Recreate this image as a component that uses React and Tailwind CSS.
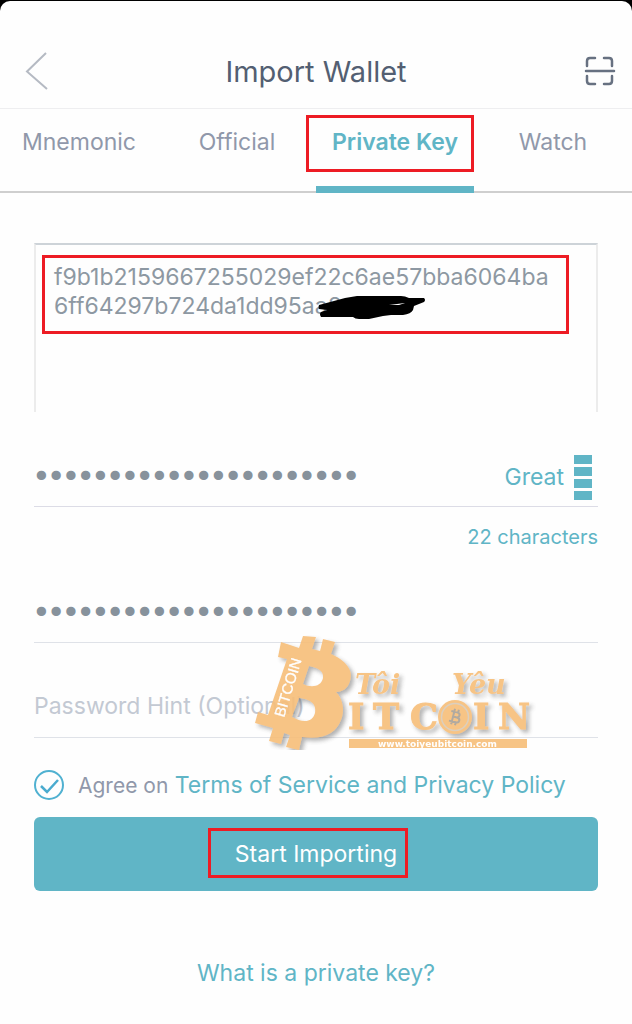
import React, { useState } from "react";

const TABS = ["Mnemonic", "Official", "Private Key", "Watch"];

function Watermark() {
  return (
    <svg
      viewBox="254 635 284 115"
      className="pointer-events-none absolute top-[-8px] left-[220px] h-[115px] w-[284px] overflow-hidden opacity-90"
      aria-hidden="true"
    >
      <defs>
        <filter id="shade" x="-10%" y="-10%" width="125%" height="125%">
          <feDropShadow dx="3" dy="3" stdDeviation="2" floodColor="#555" floodOpacity="0.5" />
        </filter>
      </defs>
      <g fill="#f7be79" filter="url(#shade)">
        <path
          fillRule="evenodd"
          d="M303 636 L316 637 L312 649 L320 651 L323 639 L335 642 L331 654 C345 660 354 670 350 681 C348 688 343 692 336 692 C343 699 345 711 341 720 C336 733 324 740 302 737 L299 750 L286 747 L290 735 L284 733 L281 744 L269 741 L273 728 L255 723 L258 712 L268 715 L287 659 L278 657 L281 642 L299 648 Z
          M309 666 L303 684 C311 688 321 687 323 678 C324 670 317 668 309 666 Z
          M299 698 L292 717 C301 722 312 724 315 713 C317 703 309 699 299 698 Z"
        />
        <g fontFamily="DejaVu Serif, serif" fontWeight="700">
          <text x="355" y="694" fontSize="27" fontStyle="italic">Tôi</text>
          <text x="452" y="694" fontSize="27" fontStyle="italic">Yêu</text>
          <g stroke="#f7be79" strokeWidth="1">
            <text x="348" y="729" fontSize="35">I</text>
            <text x="373" y="729" fontSize="35">T</text>
            <text x="410" y="729" fontSize="35">C</text>
            <text x="473" y="729" fontSize="35">I</text>
            <text x="498" y="729" fontSize="35">N</text>
          </g>
        </g>
        <circle cx="455" cy="717" r="17" />
      </g>
      <circle cx="455" cy="717" r="13.500" fill="none" stroke="#d8cbb9" strokeWidth="1.500" />
      {/* small coin mark */}
      <g transform="rotate(14 455 717)" fill="none" stroke="#a9a196" strokeWidth="2">
        <path d="M450 712h6q3 0 3 2.500t-3 2.500h-3M453 717h4q3 0 3 2.500t-3 2.500h-7M453 712v10M453 709v3M457 709v3M453 722v3M457 722v3" />
      </g>
      <rect x="349" y="739" width="178" height="9" fill="#f7be79" />
      <text x="378" y="747" fontSize="9" fontWeight="700" fontFamily="DejaVu Sans, sans-serif" fill="#fff">www.toiyeubitcoin.com</text>
      <text transform="translate(284 718) rotate(-73)" fontSize="15" fontFamily="Liberation Sans, sans-serif" fill="#fff" stroke="#fff" strokeWidth="0.300">BITCOIN</text>
    </svg>
  );
}

export default function App() {
  const [tab, setTab] = useState("Private Key");
  const [key, setKey] = useState("f9b1b2159667255029ef22c6ae57bba6064ba6ff64297b724da1dd95aa8");
  const [password, setPassword] = useState("abcdefghijklmnopqrstuv");
  const [repeat, setRepeat] = useState("abcdefghijklmnopqrstuv");
  const [agreed, setAgreed] = useState(true);

  return (
    <div className="min-h-screen bg-black pt-px font-['Inter',sans-serif] text-[23px] leading-7">
      <div className="min-h-[1023px] rounded-t-[10px] bg-[#fefefe]">
        <header className="grid h-[108px] grid-cols-[1fr_auto_1fr] items-end border-b border-[#eeeef0] px-4 pb-4">
          <button aria-label="Back" className="flex h-10 w-10 items-center justify-center">
            <svg viewBox="0 0 40 40" className="h-10 w-10" fill="none" stroke="#b5bac3" strokeWidth="2">
              <path d="M30 1 11 19.500 31 37" />
            </svg>
          </button>
          <h1 className="text-[29px] leading-10 text-[#535f72]">Import Wallet</h1>
          <button aria-label="Scan" className="flex h-10 w-8 items-center justify-center justify-self-end">
            <svg viewBox="0 0 32 32" className="h-8 w-8" fill="none" stroke="#677181" strokeWidth="2.500" strokeLinecap="round">
              <path d="M3 10V5q0-3 3-3h5M20 2h5q3 0 3 3v5M28 20v5q0 3-3 3h-5M11 28H6q-3 0-3-3v-5M2 15h28" />
            </svg>
          </button>
        </header>

        <nav className="grid h-[84px] grid-cols-4 border-b-2 border-[#cfcfcf]">
          {TABS.map((name) => (
            <button
              key={name}
              onClick={() => setTab(name)}
              className={
                name === tab
                  ? "relative -mb-0.5 border-b-[7px] border-[#60b5c6] pb-[11px] font-semibold text-[#60b5c6]"
                  : "pb-4 text-[#9098aa]"
              }
            >
              {name}
              {name === tab && <span className="absolute top-1.5 right-0 -left-2.5 h-[57px] border-3 border-[#ed1c24]" />}
            </button>
          ))}
        </nav>

        <form className="flex flex-col px-[34px] pt-[50px]" onSubmit={(e) => e.preventDefault()}>
          <div className="relative">
            <textarea
              aria-label="Private key"
              value={key}
              onChange={(e) => setKey(e.target.value)}
              spellCheck={false}
              className="block h-[169px] w-full resize-none break-all border-x-2 border-t-2 border-x-[#ececec] border-t-[#cdd3d8] pt-[18px] pr-9 pl-[18px] leading-[29px] text-[#8d98a2] outline-none"
            />
            <span className="pointer-events-none absolute top-3 right-[29px] left-2 h-[79px] border-3 border-[#ed1c24]" />
            <svg viewBox="0 0 112 28" className="pointer-events-none absolute top-[52px] left-[283px] h-7 w-28">
              <path
                fill="#000"
                fillRule="evenodd"
                d="M2 10Q1 12 2 14L10 15 4 17Q2 19 4 22H36Q38 24 42 24L52 24 66 21 74 20H86Q94 19 96 15L97 11 107 7Q109 5 107 3H92Q88 1 84 1H40L28 3ZM72 10 88 8 82 10Z"
              />
            </svg>
          </div>

          <div className="mt-9 flex h-[59px] items-center border-b border-[#dcdce6]">
            <input
              type="password"
              aria-label="Password"
              value={password}
              onChange={(e) => setPassword(e.target.value)}
              className="min-w-0 flex-1 font-['DejaVu_Sans',sans-serif] text-[25px] text-[#87929c] outline-none [-webkit-text-stroke:2px_#87929c]"
            />
            <span className="text-[#60b5c6]">Great</span>
            <span className="mr-1.5 ml-2.5 grid gap-[3px]">
              <i className="h-[9px] w-[18px] bg-[#60b5c6]" />
              <i className="h-[9px] w-[18px] bg-[#60b5c6]" />
              <i className="h-[9px] w-[18px] bg-[#60b5c6]" />
              <i className="h-[9px] w-[18px] bg-[#60b5c6]" />
            </span>
          </div>
          <p className="mt-4 text-right text-[20px] text-[#60b5c6]">22 characters</p>
          <div className="mt-8 flex h-[60px] items-center border-b border-[#dfe2e8]">
            <input
              type="password"
              aria-label="Repeat password"
              value={repeat}
              onChange={(e) => setRepeat(e.target.value)}
              className="min-w-0 flex-1 font-['DejaVu_Sans',sans-serif] text-[25px] text-[#87929c] outline-none [-webkit-text-stroke:2px_#87929c]"
            />
          </div>
          <div className="relative flex h-[95px] items-center border-b border-[#dfe2e8] pt-8">
            <input
              type="text"
              aria-label="Password hint"
              placeholder="Password Hint (Optional)"
              className="w-full outline-none placeholder:text-[#c3c9d3]"
            />
            <Watermark />
          </div>

          <div className="mt-8 flex items-center gap-3.5">
            <span className="relative h-[30px] w-[30px]">
              <input
                id="agree"
                type="checkbox"
                checked={agreed}
                onChange={(e) => setAgreed(e.target.checked)}
                className="block h-[30px] w-[30px] appearance-none rounded-full border-2 border-[#50b1d1]"
              />
              {agreed && (
                <svg viewBox="0 0 30 30" className="pointer-events-none absolute inset-0" fill="none" stroke="#4aabcf" strokeWidth="2.500">
                  <path d="m7 16 6 6L24 10" />
                </svg>
              )}
            </span>
            <p className="text-[#9098aa]">
              <label htmlFor="agree" className="text-[21px]">Agree on</label>{" "}
              <a href="#terms" className="text-[#60b5c6]">Terms of Service and Privacy Policy</a>
            </p>
          </div>

          <button className="relative mt-[17px] h-[74px] rounded-md bg-[#60b5c6] text-white">
            Start Importing
            <span className="absolute top-[11px] left-[174px] h-[50px] w-[200px] border-3 border-[#ed1c24]" />
          </button>
          <a href="#help" className="mt-[68px] self-center text-[#60b5c6]">What is a private key?</a>
        </form>
      </div>
    </div>
  );
}
